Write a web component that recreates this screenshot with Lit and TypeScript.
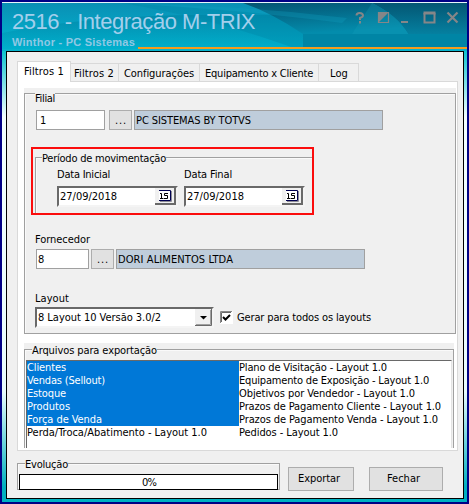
import { LitElement, html, css, svg } from "lit";
import { customElement, property } from "lit/decorators.js";

/** One line of text, spaced out or in to a set width. */
@customElement("fit-text")
class FitText extends LitElement {
  @property({ type: Number }) w = 0;
  @property() text = "";
  static styles = css`
    :host { display: block; height: 13px; line-height: 13px; white-space: pre; flex: none; }
    span { display: inline-block; }
  `;
  render() {
    return html`<span>${this.text}</span>`;
  }
  firstUpdated() {
    const s = this.renderRoot.querySelector("span")!;
    const n = this.text.length;
    if (this.w && n) s.style.letterSpacing = (this.w - s.getBoundingClientRect().width) / n + "px";
  }
}

const t = (text: string, w: number, cls = "") => html`<fit-text class=${cls} .text=${text} .w=${w}></fit-text>`;

const tabs: [string, number][] = [
  ["Filtros 2", 40],
  ["Configurações", 70],
  ["Equipamento x Cliente", 108],
  ["Log", 18],
];

const left: [string, number][] = [
  ["Clientes", 39],
  ["Vendas (Sellout)", 78],
  ["Estoque", 39],
  ["Produtos", 43],
  ["Força de Venda", 75],
  ["Perda/Troca/Abatimento - Layout 1.0", 180],
];
const right: [string, number][] = [
  ["Plano de Visitação - Layout 1.0", 148],
  ["Equipamento de Exposição - Layout 1.0", 190],
  ["Objetivos por Vendedor - Layout 1.0", 176],
  ["Prazos de Pagamento Cliente - Layout 1.0", 202],
  ["Prazos de Pagamento Venda - Layout 1.0", 199],
  ["Pedidos - Layout 1.0", 99],
];

@customElement("date-box")
class DateBox extends LitElement {
  @property() value = "";
  static styles = css`
    :host { display: flex; box-sizing: border-box; width: 121px; height: 21px; background: #fff;
      border: 2px solid; border-color: #696969 #f4f4f4 #f4f4f4 #696969; padding-left: 1px; justify-content: space-between; }
    .v { margin-top: 2px; }
    svg { display: block; width: 21px; height: 17px; }
  `;
  render() {
    return html`<div class="v">${t(this.value, 57)}</div>
      <svg viewBox="0 0 21 17">
        <rect width="21" height="17" fill="#f0f0f0" />
        <path d="M20 0V17M0 16H21" stroke="#696969" stroke-width="2" fill="none" />
        <path d="M5 13.5H16.5V3" stroke="#8c8c96" stroke-width="1" fill="none" />
        <rect x="4" y="2" width="11" height="10" fill="#fff" />
        <path d="M4 2.5H15.5V12.5H4" stroke="#000050" fill="none" />
        <path d="M5 5.5H6.5V10M5 10.5H8.500M13 5.500H9.500V7.500H12.500V10.500H9" stroke="#000" fill="none" />
      </svg>`;
  }
}

@customElement("app-root")
class AppRoot extends LitElement {
  static styles = css`
    :host { display: block; font: 11px "DejaVu Sans Condensed", "DejaVu Sans", sans-serif; font-stretch: condensed; color: #000; }
    * { box-sizing: border-box; }
    .win { width: 469px; height: 504px; border: 2px solid #000085; display: flex; flex-direction: column; overflow: hidden;
      background: linear-gradient(#10c4d0 50px, #f2ffff 115px, #e8fcfd 390px, #00b0c0 485px); }
    .head { display: grid; height: 49px; flex: none; border-top: 1px solid #e6f5fa; }
    .head > * { grid-area: 1 / 1; }
    .head > svg { width: 465px; height: 48px; display: block; }
    .titles { font-family: "Liberation Sans", sans-serif; padding-left: 10px; color: #a3cfec; }
    .big { font-size: 22px; height: 28px; margin-top: 5px; }
    .big fit-text { height: 28px; line-height: 28px; }
    .sub { font-size: 11px; font-weight: bold; color: #90c8e4; height: 13px; }
    .body { margin: 0 3px 3px 4px; height: 448px; border: 1px solid #000; background: #f0f0f0; padding: 9px 4px 0 10px;
      display: flex; flex-direction: column; width: 458px; }
    .tabs { display: flex; align-items: flex-end; height: 20px; flex: none; }
    .tab { height: 18px; border: 1px solid #d9d9d9; border-left: 0; border-bottom: 0; padding: 3px 5px 0 5px; }
    .tab.first { height: 21px; width: 54px; background: #fff; border-left: 1px solid #d9d9d9; padding: 3px 0 0 6px; margin-bottom: -1px; position: relative; }
    .tab.t0 { width: 48px; padding-left: 3px; } .t1 { width: 81px; } .t2 { width: 119px; } .tab.t3 { width: 40px; padding-left: 11px; }
    .page { width: 441px; height: 370px; border: 1px solid #d9d9d9; background: #fff; padding: 6px 0 0 6px; flex: none; }
    .filters { width: 432px; height: 246px; background: #f0f0f0; padding-top: 5px; }
    .group { border: 1px solid #a0a0a0; box-shadow: inset 1px 1px #fafafa; }
    .legend { display: flex; margin-top: -6px; }
    .legend fit-text { background: #f0f0f0; }
    .g1 { height: 241px; width: 432px; padding-left: 11px; }
    .g1 > .legend { margin-left: -1px; margin-top: -2px; height: 13px; }
    .row { display: flex; }
    .r1 { margin-top: 5px; }
    .r2 { margin-top: 3px; }
    .r3 { margin: 2px 0 0 -1px; }
    .field { height: 20px; border: 1px solid #a0a0a0; background: #fff; padding: 3px 0 0 3px; overflow: hidden; }
    .code1 { width: 69px; }
    .code2 { width: 53px; padding-left: 1px; }
    .ro { background: #bfcddb; width: 249px; padding-left: 1px; }
    .dots { width: 23px; height: 20px; border: 1px solid #adadad; background: #e1e1e1; padding: 3px 0 0 5px; }
    .d1 { margin: 0 2px 0 4px; }
    .d2 { margin: 0 2px; }
    .red { width: 283px; height: 68px; border: 2px solid #fb0d0d; margin: 17px 0 0 -5px; padding: 8px 0 0 2px; }
    .g2 { height: 56px; border-right: 0; border-bottom: 0; }
    .g2 .legend { margin-left: 6px; }
    .cap { margin-top: 3px; padding-left: 21px; }
    .gap { width: 74px; }
    .dates { margin: 5px 0 0 21px; gap: 6px; }
    .fn { margin: 18px 0 0 -1px; }
    .ly { margin: 23px 0 0 -1px; }
    .combo { width: 179px; height: 21px; border: 2px solid; border-color: #696969 #f4f4f4 #f4f4f4 #696969; background: #fff; display: flex; justify-content: space-between; padding-left: 1px; }
    .combo fit-text { margin-top: 2px; }
    .combo svg, .chk { display: block; }
    .chk { margin: 4px 4px 0 6px; }
    .all { margin-top: 4px; }
    .files { width: 430px; height: 105px; margin-top: 9px; background: #f0f0f0; padding-top: 6px; }
    .g3 { height: 99px; border-bottom: 0; }
    .g3 .legend { margin-left: 7px; }
    .list { margin: 3px 1px 0 1px; height: 88px; background: #fff; border: 1px solid #696969; border-bottom: 0; border-right-color: #e3e3e3; display: flex; }
    .col { width: 212px; }
    .item { height: 13px; padding-left: 0; }
    .item.on { background: #0078d7; color: #fff; }
    .foot { display: flex; margin-top: 11px; }
    .g4 { width: 263px; height: 27px; margin-top: 1px; }
    .g4 .legend { margin-left: 7px; }
    .bar { margin: 3px 0 0 1px; width: 259px; height: 16px; border: 1px solid #000; background: #fff; padding: 1px 0 0 122px; }
    .btn { height: 24px; border: 1px solid #adadad; background: #e1e1e1; margin: 5px 0 0 8px; padding: 4px 0 0 9px; width: 66px; }
    .btn.c { width: 74px; margin-left: 15px; padding-left: 17px; }
  `;

  private header() {
    return svg`<svg viewBox="0 0 465 48">
      <defs>
        <linearGradient id="a" x1="0" y1="0" x2="0" y2="1"><stop offset="0" stop-color="#0a8fb4"/><stop offset="1" stop-color="#00b8d3"/></linearGradient>
        <linearGradient id="b" x1="0" y1="0" x2="0" y2="1"><stop offset="0" stop-color="#007f9f"/><stop offset="1" stop-color="#00accb"/></linearGradient>
        <linearGradient id="c" x1="0" y1="0" x2="0.300" y2="1"><stop offset="0" stop-color="#045472"/><stop offset="1" stop-color="#038cac"/></linearGradient>
        <linearGradient id="d" x1="0" y1="0" x2="0" y2="1"><stop offset="0" stop-color="#045673"/><stop offset="1" stop-color="#0580a0"/></linearGradient>
      </defs>
      <rect width="465" height="48" fill="url(#a)"/>
      <path d="M0 30Q90 12 200 12H330L345 48H0Z" fill="url(#b)" opacity=".55"/>
      <path d="M120 0Q230 6 345 19L370 48H300Q215 16 120 0Z" fill="#0088a8" opacity=".4"/>
      <path d="M241 0H370Q396 13 406 31H301Q270 10 241 0Z" fill="url(#c)"/>
      <path d="M130 1Q250 8 340 20L345 15Q240 2 130 1Z" fill="#12a0c0" opacity=".3"/>
      <path d="M370 0H465V31H406Q396 13 370 0Z" fill="url(#d)"/>
      <path d="M370 0Q396 13 406 31H350Z" fill="#18a0bd" opacity=".25"/>
      <rect x="301" y="31" width="164" height="17" fill="#0085a5"/>
      <rect x="136" y="44" width="329" height="2" fill="#f59c1d"/>
      <rect x="0" y="46" width="465" height="2" fill="#08b3cc"/>
      <g fill="none" stroke="#858688" stroke-width="2">
        <path d="M354.500 12.500Q354.500 10 357.500 10Q361 10 361 12.500Q361 14 358 15V17M358 18V20.500"/>
        <path d="M376.500 9.500H386.500V19.500H376.500Z" stroke-width="1.200"/><path d="M376.500 19.500V9.500H386.500Z" fill="#858688" stroke="none"/>
        <path d="M399 19H406M422.500 10V19.500H432.500V10" /><path d="M421.500 10H433.500" stroke-width="3"/>
        <path d="M445.500 9.500L455.500 19.500M455.500 9.500L445.500 19.500" stroke-width="2.200"/>
      </g>
    </svg>`;
  }

  render() {
    return html`<div class="win">
      <div class="head">
        ${this.header()}
        <div class="titles">
          <div class="big">${t("2516 - Integração M-TRIX", 243)}</div>
          <div class="sub">${t("Winthor - PC Sistemas", 123)}</div>
        </div>
      </div>
      <div class="body">
        <div class="tabs">
          <div class="tab first">${t("Filtros 1", 40)}</div>
          ${tabs.map(([s, w], i) => html`<div class="tab t${i}">${t(s, w)}</div>`)}
        </div>
        <div class="page">
          <div class="filters"><div class="group g1">
            <div class="legend">${t("Filial", 20)}</div>
            <div class="row r1">
              <div class="field code1">${t("1", 6)}</div>
              <div class="dots d1">${t("...", 12)}</div>
              <div class="field ro">${t("PC SISTEMAS BY TOTVS", 115)}</div>
            </div>
            <div class="red"><div class="group g2">
              <div class="legend">${t("Período de movimentação", 124)}</div>
              <div class="row cap">${t("Data Inicial", 53)}<div class="gap"></div>${t("Data Final", 48)}</div>
              <div class="row dates"><date-box value="27/09/2018"></date-box><date-box value="27/09/2018"></date-box></div>
            </div></div>
            <div class="fn">${t("Fornecedor", 55)}</div>
            <div class="row r2">
              <div class="field code2">${t("8", 6)}</div>
              <div class="dots d2">${t("...", 12)}</div>
              <div class="field ro">${t("DORI ALIMENTOS LTDA", 115)}</div>
            </div>
            <div class="ly">${t("Layout", 34)}</div>
            <div class="row r3">
              <div class="combo">${t("8 Layout 10 Versão 3.0/2", 123)}
                <svg width="17" height="17"><rect width="17" height="17" fill="#f0f0f0"/><path d="M16.500 0V16.500H0" stroke="#696969" fill="none"/><path d="M15.500 1V15.500H1" stroke="#a0a0a0" fill="none"/><path d="M5 7H12L8.500 10.500Z"/></svg>
              </div>
              <svg class="chk" width="13" height="13"><rect width="13" height="13" fill="#fff"/><path d="M.5 12V.5H12" stroke="#888" fill="none"/><path d="M1.500 11V1.500H11" stroke="#696969" fill="none"/><path d="M3 6L5.500 8.500L10 4" stroke="#000" stroke-width="2" fill="none"/></svg>
              <div class="all">${t("Gerar para todos os layouts", 134)}</div>
            </div>
          </div></div>
          <div class="files"><div class="group g3">
            <div class="legend">${t("Arquivos para exportação", 125)}</div>
            <div class="list">
              <div class="col">${left.map(([s, w], i) => html`<div class="item ${i < 5 ? "on" : ""}">${t(s, w)}</div>`)}</div>
              <div class="col b">${right.map(([s, w]) => html`<div class="item">${t(s, w)}</div>`)}</div>
            </div>
          </div></div>
        </div>
        <div class="foot">
          <div class="group g4"><div class="legend">${t("Evolução", 43)}</div><div class="bar">${t("0%", 14)}</div></div>
          <div class="btn">${t("Exportar", 42)}</div>
          <div class="btn c">${t("Fechar", 33)}</div>
        </div>
      </div>
    </div>`;
  }
}
